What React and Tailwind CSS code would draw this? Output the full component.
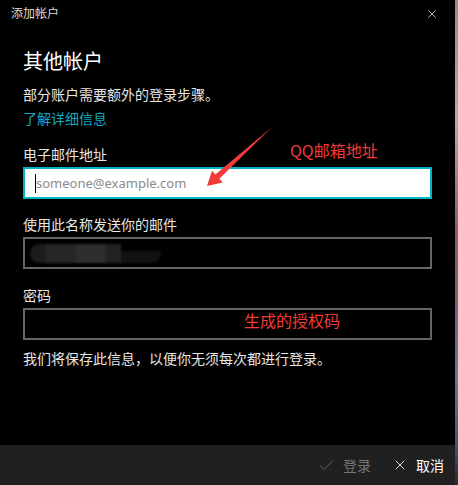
import { Check, X } from 'lucide-react';

const cjk = { fontFamily: '"Noto Sans CJK SC", "Noto Sans", sans-serif' };

const Field = ({ label, className = '', children }) => (
  <>
    <div className={`text-[14px] leading-[20px] text-[#e6e6e6] ${className}`}>{label}</div>
    {children}
  </>
);

export default function App() {
  return (
    <div className="flex w-[458px] h-[485px] bg-black" style={cjk}>
      <div className="relative flex flex-col w-[455px] h-full bg-black">
        {/* title bar */}
        <div className="flex items-start justify-between h-[30px] pl-[11px] pr-[16px] pt-[5px]">
          <span className="text-[12px] leading-[16px] text-[#dcdcdc]">添加帐户</span>
          <X className="w-[14px] h-[14px] mt-[2px] text-[#e0e0e0]" strokeWidth={1.3} />
        </div>

        <div className="flex flex-col flex-1 px-[23px]">
          <h1 className="mt-[17px] text-[20px] leading-[28px] text-white font-normal">其他帐户</h1>
          <p className="mt-[9px] text-[14px] leading-[20px] text-[#e6e6e6]">部分账户需要额外的登录步骤。</p>
          <a className="mt-[4px] text-[14px] leading-[20px] text-[#17a9c2]">了解详细信息</a>

          <Field label="电子邮件地址" className="mt-[16px]">
            <div className="mt-[3px] flex items-center h-[32px] border-2 border-[#00b4c4] bg-white pl-[10px]">
              <span className="w-px h-[19px] bg-black" />
              <span
                className="text-[13px] leading-[20px] text-[#8b8b8b]"
                style={{ fontFamily: '"Noto Sans", "Open Sans", sans-serif' }}
              >
                someone@example.com
              </span>
            </div>
          </Field>

          <Field label="使用此名称发送你的邮件" className="mt-[15px]">
            <div className="mt-[3px] flex items-center h-[32px] border-2 border-[#666] bg-black pl-[5px]">
              <div className="flex h-[19px] w-[131px] rounded-full overflow-hidden blur-[1px]">
                <div className="w-[16px] bg-[#1c1c1c]" />
                <div className="w-[30px] bg-[#262626]" />
                <div className="w-[30px] bg-[#2e2e2e]" />
                <div className="w-[15px] bg-[#222]" />
                <div className="flex-1 flex flex-col">
                  <div className="h-[7px] bg-black" />
                  <div className="flex-1 bg-[#121212]" />
                </div>
              </div>
            </div>
          </Field>

          <Field label="密码" className="mt-[16px]">
            <div className="mt-[3px] h-[32px] border-2 border-[#666] bg-black" />
          </Field>

          <p className="mt-[8px] text-[14px] leading-[20px] text-[#e6e6e6]">
            我们将保存此信息，以便你无须每次都进行登录。
          </p>
        </div>

        {/* footer */}
        <div className="flex items-center justify-end h-[40px] bg-[#202020] pr-[11px]">
          <Check className="w-[19px] h-[19px] text-[#6a6a6a]" strokeWidth={1.2} />
          <span className="ml-[7px] text-[14px] leading-[20px] text-[#777]">登录</span>
          <X className="ml-[21px] w-[16px] h-[16px] text-[#e8e8e8]" strokeWidth={1.4} />
          <span className="ml-[8px] text-[14px] leading-[20px] text-white">取消</span>
        </div>

        {/* red annotations */}
        <span className="absolute left-[290px] top-[139px] text-[16px] leading-[22px] text-[#f13a3a]">QQ邮箱地址</span>
        <span className="absolute left-[244px] top-[309px] text-[16px] leading-[22px] text-[#f13a3a]">生成的授权码</span>
        <svg className="absolute left-0 top-0 pointer-events-none" width="455" height="485">
          <polygon
            points="272,127 219.4,178.8 222.8,182.5 207,186 212,170.7 215.4,174.4"
            fill="#f13a3a"
          />
        </svg>
      </div>
      <div className="w-[3px] h-full bg-[linear-gradient(to_bottom,#8f8c88_0%,#b7aaa0_25%,#8a5d62_48%,#6f6572_62%,#5f7a98_78%,#3f5570_92%,#2a2a2a_100%)]" />
    </div>
  );
}
